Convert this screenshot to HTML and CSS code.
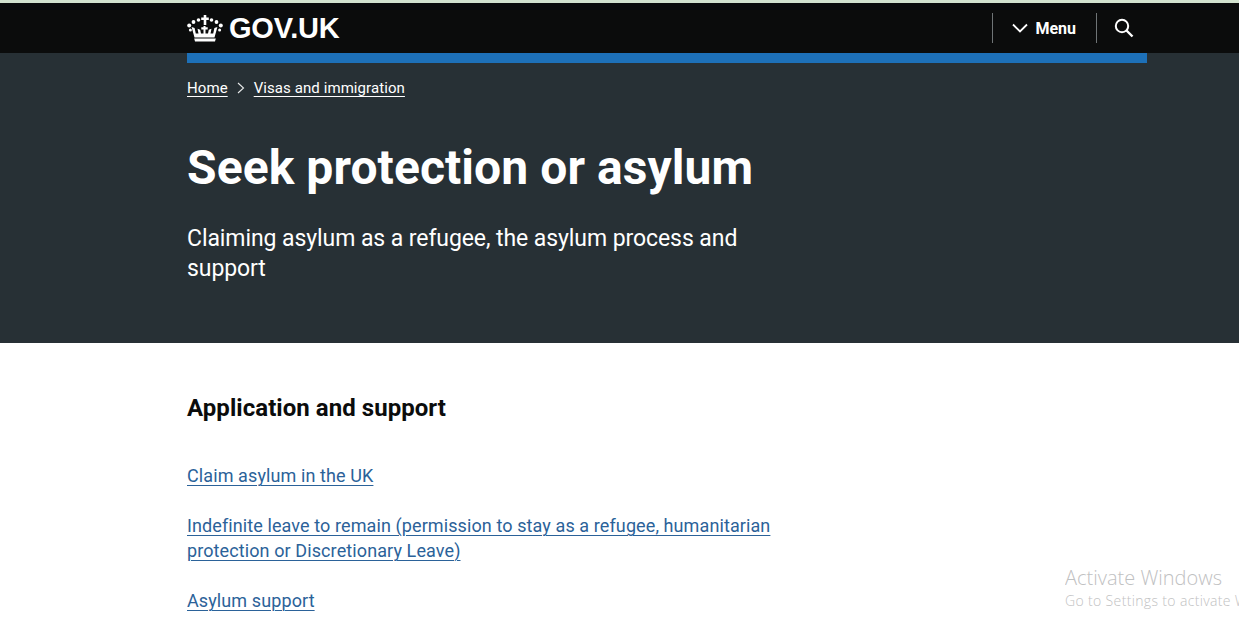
FILE: index.html
```html
<!DOCTYPE html>
<html lang="en">
<head>
<meta charset="utf-8">
<title>Seek protection or asylum</title>
<link rel="stylesheet" href="styles.css">
</head>
<body>
<div class="top-strip"></div>
<header class="site-header">
  <div class="wrap header-row">
    <a class="logo" href="#">
      <svg class="crown" viewBox="0 0 36 27" width="36" height="27" aria-hidden="true">
        <g fill="#fff">
          <path d="M16.700 0h2.600v2.500h2.500v2.500h-2.500v5h-2.600V5h-2.500V2.500h2.500z"/>
          <circle cx="11.500" cy="5" r="1.800"/><circle cx="24.500" cy="5" r="1.800"/>
          <circle cx="6.500" cy="7" r="1.900"/><circle cx="29.500" cy="7" r="1.900"/>
          <circle cx="2.200" cy="10.500" r="2"/><circle cx="33.800" cy="10.500" r="2"/>
          <circle cx="3.400" cy="15" r="1.500"/><circle cx="32.600" cy="15" r="1.500"/>
          <path d="M4.600 12l3 1 1.200 5.500h2.700l-1-4.800 2.700 1 .8 3.800h2.500v-4h-2.200v-2.300h2.200V11h2v1.200h2.200v2.300H18.500v4H21l.8-3.800 2.700-1-1 4.800h2.700l1.200-5.500 3-1-2.900 10.500H7.500z"/>
          <path d="M7.200 23.500h21.600l-.8 3H8z"/>
        </g>
      </svg>
      <span class="logo-text">GOV.UK</span>
    </a>
    <nav class="header-nav">
      <a class="menu-link" href="#">
        <svg class="chevron" viewBox="0 0 16 10" width="16" height="10" aria-hidden="true"><path d="M1 1.500l7 7 7-7" fill="none" stroke="#fff" stroke-width="1.800"/></svg>
        <span>Menu</span>
      </a>
      <a class="search-link" href="#" aria-label="Search">
        <svg viewBox="0 0 20 20" width="20" height="20" aria-hidden="true"><circle cx="8" cy="8" r="6.200" fill="none" stroke="#fff" stroke-width="2"/><path d="M12.500 12.500l6 6" stroke="#fff" stroke-width="2.400" fill="none"/></svg>
      </a>
    </nav>
  </div>
</header>
<section class="hero">
  <div class="wrap">
    <div class="blue-bar"></div>
    <nav class="breadcrumbs">
      <a href="#">Home</a>
      <svg class="crumb-sep" viewBox="0 0 8 12" width="8" height="12" aria-hidden="true"><path d="M1 1l5.500 5L1 11" fill="none" stroke="#e8eaea" stroke-width="1.100"/></svg>
      <a href="#">Visas and immigration</a>
    </nav>
    <h1>Seek protection or asylum</h1>
    <p class="lede">Claiming asylum as a refugee, the asylum process and support</p>
  </div>
</section>
<main class="wrap content">
  <h2>Application and support</h2>
  <ul class="links">
    <li><a href="#">Claim asylum in the UK</a></li>
    <li><a href="#">Indefinite leave to remain (permission to stay as a refugee, humanitarian protection or Discretionary Leave)</a></li>
    <li><a href="#">Asylum support</a></li>
  </ul>
</main>
<div class="watermark">
  <div class="wm-title">Activate Windows</div>
  <div class="wm-sub">Go to Settings to activate Windows.</div>
</div>
</body>
</html>
```
FILE: styles.css
```css
* { box-sizing: border-box; }
html, body { margin: 0; padding: 0; height: 633px; overflow: hidden; background: #fff; }
body { font-family: Roboto, "Noto Sans", sans-serif; color: #0b0c0c; position: relative; }
.wrap { width: 960px; margin-left: 187px; }
.top-strip { height: 3px; background: #d3e3cf; }
.site-header { height: 50px; background: #0b0c0c; }
.header-row { display: flex; justify-content: space-between; align-items: center; height: 50px; }
.logo { display: flex; align-items: center; gap: 6px; color: #fff; text-decoration: none; }
.crown { display: block; }
.logo-text { font-family: "Liberation Sans", sans-serif; font-weight: 700; font-size: 29px; line-height: 30px; letter-spacing: -0.2px; }
.header-nav { display: flex; align-items: center; height: 30px; margin-right: 13px; }
.menu-link { display: flex; align-items: center; gap: 7px; height: 30px; padding: 0 20px 0 19px; border-left: 1px solid #6f7476; border-right: 1px solid #6f7476; color: #fff; text-decoration: none; font-weight: 700; font-size: 16px; }
.search-link { display: flex; align-items: center; padding-left: 17px; }
.hero { height: 290px; background: #273035; color: #fff; }
.blue-bar { height: 10px; background: #1d70b8; }
.breadcrumbs { display: flex; align-items: center; gap: 9px; height: 50px; font-size: 15px; letter-spacing: 0.08px; }
.breadcrumbs a { color: #fff; text-decoration: underline; text-underline-offset: 3px; text-decoration-thickness: 1px; }
.crumb-sep { display: block; }
h1 { margin: 0; padding-top: 26px; font-size: 48px; line-height: 58px; font-weight: 700; letter-spacing: 0.08px; }
.lede { margin: 27px 0 0; width: 580px; font-size: 23px; line-height: 30px; letter-spacing: -0.08px; }
.content { padding-top: 50px; }
h2 { margin: 0; font-size: 24px; line-height: 30px; font-weight: 700; letter-spacing: 0.05px; }
.links { list-style: none; margin: 40px 0 0; padding: 0; width: 600px; }
.links li { margin-bottom: 25px; font-size: 18px; line-height: 25px; letter-spacing: 0.1px; }
.links a { color: #2b6299; text-decoration: underline; text-underline-offset: 3px; text-decoration-thickness: 1px; }
.watermark { position: absolute; left: 1065px; top: 565px; width: 174px; overflow: hidden; white-space: nowrap; font-family: "Open Sans", sans-serif; color: #bfc1c2; }
.wm-title { font-size: 20px; line-height: 26px; font-weight: 300; }
.wm-sub { font-size: 14px; line-height: 19px; font-weight: 300; letter-spacing: 0.35px; }
```
